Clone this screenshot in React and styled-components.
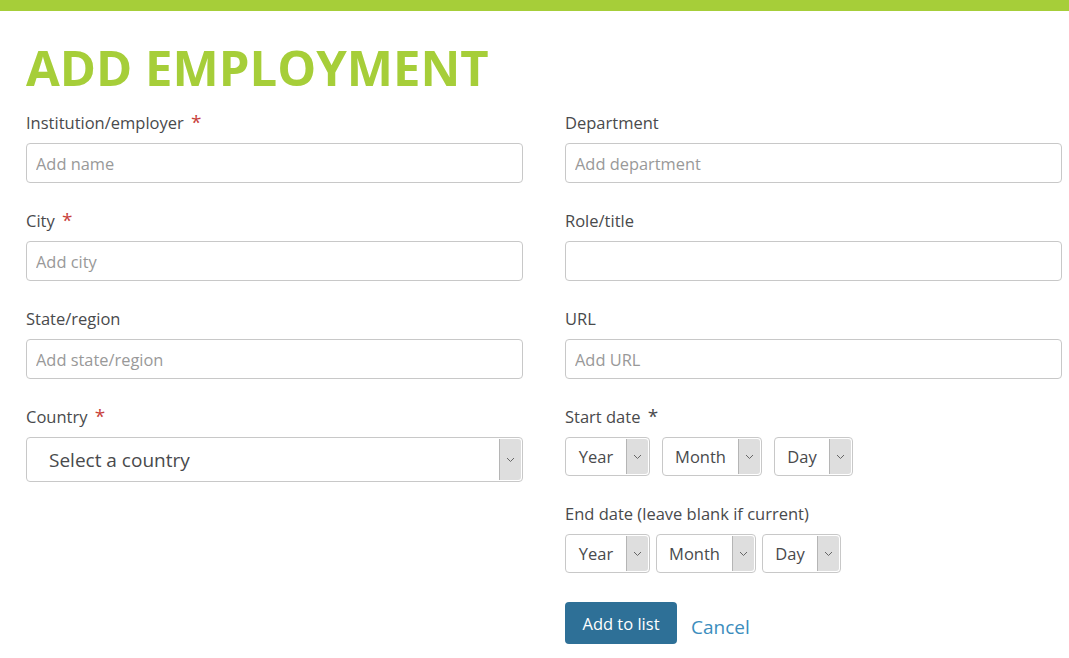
import React from "react";
import styled, { createGlobalStyle } from "styled-components";

const GlobalStyle = createGlobalStyle`
  body {
    margin: 0;
    background: #fff;
    font-family: "Open Sans", "Noto Sans", sans-serif;
    color: #494a4c;
  }
`;

const leftFields = [
  { label: "Institution/employer", required: true, placeholder: "Add name" },
  { label: "City", required: true, placeholder: "Add city" },
  { label: "State/region", placeholder: "Add state/region" },
];

const rightFields = [
  { label: "Department", placeholder: "Add department" },
  { label: "Role/title", placeholder: "" },
  { label: "URL", placeholder: "Add URL" },
];

const Chevron = () => (
  <svg width="9" height="6" viewBox="0 0 9 6">
    <path d="M1 1l3.5 3.5L8 1" fill="none" stroke="#666" strokeWidth="1" />
  </svg>
);

const DateSelect = ({ label, width }) => (
  <SmallSelect style={{ width }}>
    <SmallText>{label}</SmallText>
    <ArrowBox>
      <Chevron />
    </ArrowBox>
  </SmallSelect>
);

const Field = ({ label, required, placeholder }) => (
  <FieldBox>
    <Label>
      {label} {required && <Star>*</Star>}
    </Label>
    <Input placeholder={placeholder} />
  </FieldBox>
);

export default function App() {
  return (
    <>
      <GlobalStyle />
      <TopBar />
      <Page>
        <Title>ADD EMPLOYMENT</Title>
        <Columns>
          <Column>
            {leftFields.map((f, i) => (
              <Field key={i} {...f} />
            ))}
            <FieldBox>
              <Label>
                Country <Star>*</Star>
              </Label>
              <BigSelect>
                <BigText>Select a country</BigText>
                <ArrowBox>
                  <Chevron />
                </ArrowBox>
              </BigSelect>
            </FieldBox>
          </Column>
          <Column>
            {rightFields.map((f, i) => (
              <Field key={i} {...f} />
            ))}
            <FieldBox>
              <Label>
                Start date <Star dark>*</Star>
              </Label>
              <DateRow gap={12}>
                <DateSelect label="Year" width={85} />
                <DateSelect label="Month" width={100} />
                <DateSelect label="Day" width={79} />
              </DateRow>
            </FieldBox>
            <FieldBox>
              <Label>End date (leave blank if current)</Label>
              <DateRow gap={6}>
                <DateSelect label="Year" width={85} />
                <DateSelect label="Month" width={100} />
                <DateSelect label="Day" width={79} />
              </DateRow>
            </FieldBox>
            <Actions>
              <Button>Add to list</Button>
              <CancelLink>Cancel</CancelLink>
            </Actions>
          </Column>
        </Columns>
      </Page>
    </>
  );
}

const TopBar = styled.div`
  height: 11px;
  background: #a6ce39;
`;

const Page = styled.div`
  padding: 0 7px 0 26px;
`;

const Title = styled.h1`
  margin: 28px 0 0 0;
  font-size: 49px;
  line-height: 56px;
  font-weight: 700;
  color: #a6ce39;
`;

const Columns = styled.div`
  display: grid;
  grid-template-columns: 497px 497px;
  column-gap: 42px;
  margin-top: 17px;
`;

const Column = styled.div`
  display: flex;
  flex-direction: column;
  gap: 27px;
`;

const FieldBox = styled.div`
  display: flex;
  flex-direction: column;
`;

const Label = styled.label`
  font-size: 16.5px;
  line-height: 22px;
  height: 22px;
  color: #494a4c;
  margin-bottom: 9px;
`;

const Star = styled.span`
  color: ${(p) => (p.dark ? "#494a4c" : "#c8413b")};
  font-size: 19px;
  line-height: 1;
  margin-left: 3px;
`;

const Input = styled.input`
  box-sizing: border-box;
  height: 40px;
  width: 100%;
  border: 1px solid #c8c8c8;
  border-radius: 4px;
  padding: 0 9px;
  font-family: "Open Sans", "Noto Sans", sans-serif;
  font-size: 16.4px;
  color: #494a4c;
  outline: none;
  &::placeholder {
    color: #999;
  }
`;

const BigSelect = styled.div`
  box-sizing: border-box;
  height: 45px;
  display: flex;
  align-items: stretch;
  border: 1px solid #c8c8c8;
  border-radius: 4px;
  overflow: hidden;
`;

const BigText = styled.div`
  flex: 1;
  display: flex;
  align-items: center;
  padding-left: 22px;
  font-size: 19px;
  color: #494a4c;
`;

const ArrowBox = styled.div`
  width: 21px;
  margin: 1px 1px 1px 0;
  border-left: 1px solid #b5b5b5;
  border-radius: 0 3px 3px 0;
  background: #dedede;
  display: flex;
  align-items: center;
  justify-content: center;
`;

const DateRow = styled.div`
  display: flex;
  gap: ${(p) => p.gap}px;
`;

const SmallSelect = styled.div`
  box-sizing: border-box;
  height: 39px;
  display: flex;
  align-items: stretch;
  border: 1px solid #c8c8c8;
  border-radius: 4px;
  overflow: hidden;
`;

const SmallText = styled.div`
  flex: 1;
  display: flex;
  align-items: center;
  justify-content: center;
  font-size: 16.5px;
  color: #494a4c;
`;

const Actions = styled.div`
  display: flex;
  align-items: flex-end;
  gap: 14px;
  margin-top: 2px;
`;

const Button = styled.button`
  height: 42px;
  width: 112px;
  border: none;
  border-radius: 4px;
  background: #2e7097;
  color: #fff;
  font-family: "Open Sans", "Noto Sans", sans-serif;
  font-size: 16.5px;
`;

const CancelLink = styled.a`
  font-size: 19px;
  line-height: 26px;
  color: #3b8dbd;
  margin-bottom: 4px;
  cursor: pointer;
`;
